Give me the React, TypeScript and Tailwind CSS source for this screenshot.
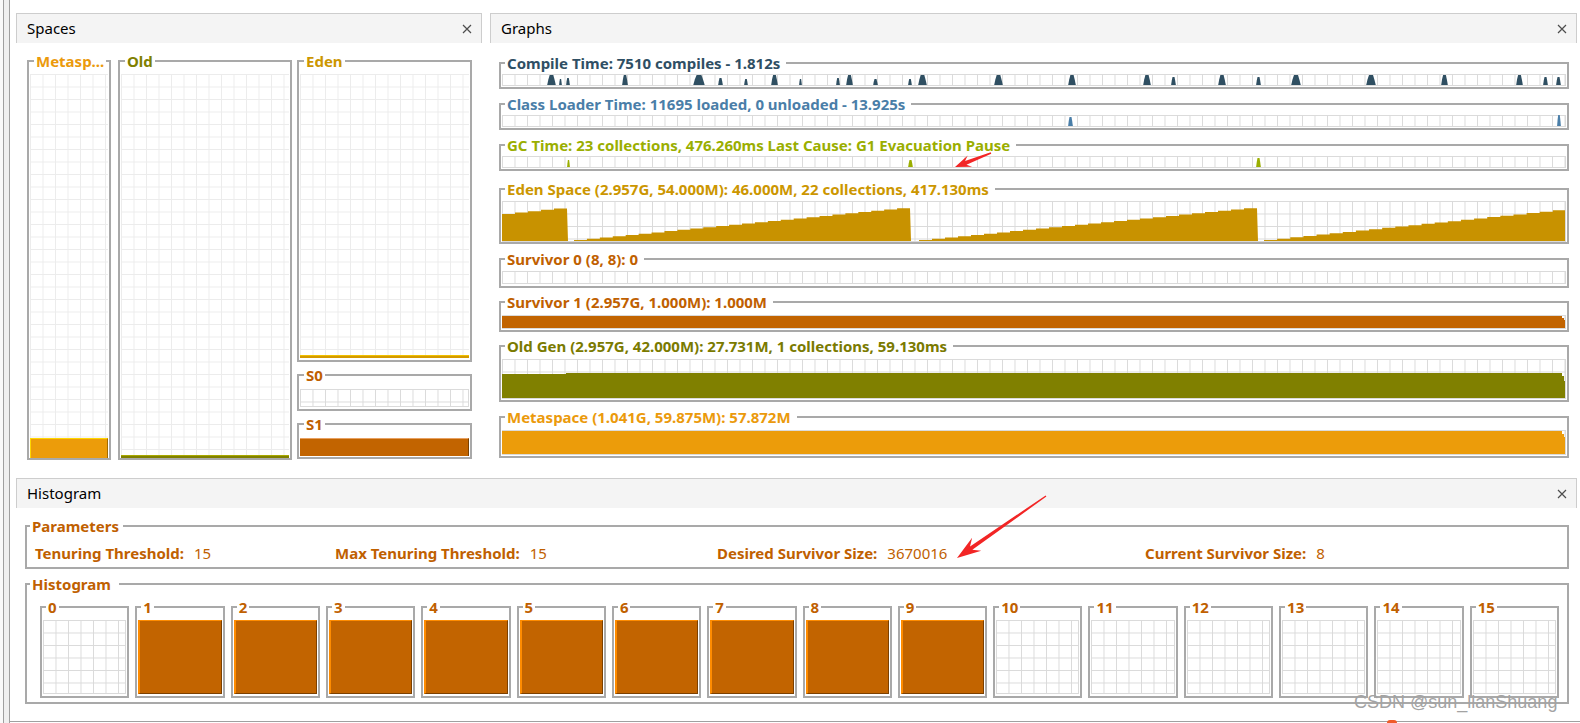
import React from "react";

// grid backgrounds (chart paper look)
const GRID_SPACE =
  "bg-[linear-gradient(to_right,#ececec_1px,transparent_1px),linear-gradient(to_bottom,#ececec_1px,transparent_1px)] bg-size-[12.5px_12.5px]";
const GRID_GRAPH =
  "bg-[linear-gradient(to_right,#dadada_1px,transparent_1px),linear-gradient(to_bottom,#dadada_1px,transparent_1px)] bg-size-[12.5px_12.5px] border-r border-b border-[#dadada]";

const STRIP_W = 1064;

type Peak = [number, number, number];

const compilePeaks: Peak[] = [
  [45, 54, 11], [57, 60, 7], [64, 68, 8], [120, 126, 11], [191, 203, 11], [216, 221, 8],
  [242, 246, 7], [269, 276, 11], [297, 300, 7], [334, 338, 8], [344, 351, 11], [371, 376, 7],
  [406, 410, 7], [416, 425, 11], [492, 501, 11], [566, 574, 11], [641, 649, 11], [669, 674, 9],
  [716, 724, 11], [754, 759, 9], [789, 799, 11], [864, 874, 11], [939, 946, 11], [1014, 1021, 11],
  [1041, 1046, 9], [1054, 1059, 9],
];
const loaderPeaks: Peak[] = [[566, 571, 10], [1055, 1059, 12]];
const gcPeaks: Peak[] = [[65, 68, 8], [406, 411, 8], [754, 759, 10]];

function peakPoints([x0, x1, h]: Peak, H: number) {
  const w = x1 - x0;
  return [
    [x0, H], [x0 + w * 0.15, H - h * 0.6], [x0 + w * 0.3, H - h],
    [x0 + w * 0.7, H - h], [x0 + w * 0.85, H - h * 0.55], [x1, H],
  ]
    .map((p) => p.join(","))
    .join(" ");
}

function Peaks({ peaks, color, h }: { peaks: Peak[]; color: string; h: number }) {
  return (
    <svg className="block h-full w-full" width={STRIP_W} height={h}>
      {peaks.map((p, i) => (
        <polygon key={i} points={peakPoints(p, h)} fill={color} />
      ))}
    </svg>
  );
}

// eden sawtooth: [x0, x1, v0, v1]
const edenSegs: [number, number, number, number][] = [
  [0, 65, 28, 35],
  [72, 408, 2, 35],
  [417, 755, 2, 35],
  [762, 1064, 2, 33],
];

function edenPoints(H: number) {
  const pts: number[][] = [[0, H]];
  edenSegs.forEach(([x0, x1, v0, v1], si) => {
    if (si > 0) pts.push([x0, H - 1]);
    const n = Math.max(1, Math.round((x1 - x0) / 13));
    for (let i = 0; i < n; i++) {
      const xa = x0 + ((x1 - x0) * i) / n;
      const xb = x0 + ((x1 - x0) * (i + 1)) / n;
      const v = v0 + ((v1 - v0) * i) / n;
      pts.push([xa, H - v], [xb, H - v]);
    }
    pts.push([x1 + 1, H - 1]);
  });
  pts.push([STRIP_W, H]);
  return pts.map((p) => p.join(",")).join(" ");
}

function EdenChart() {
  const H = 41;
  return (
    <svg className="block h-full w-full" width={STRIP_W} height={H}>
      <polygon points={edenPoints(H)} fill="#c89200" />
    </svg>
  );
}

function FlatBar({ h, color, levels }: { h: number; color: string; levels: [number, number, number][] }) {
  // levels: [x0, x1, value]
  return (
    <svg className="block h-full w-full" width={STRIP_W} height={h}>
      {levels.map(([x0, x1, v], i) => (
        <rect key={i} x={x0} y={h - v} width={x1 - x0} height={v} fill={color} />
      ))}
    </svg>
  );
}

function CloseIcon() {
  return (
    <svg width="10" height="10" viewBox="0 0 10 10" className="shrink-0">
      <path d="M1 1L9 9M9 1L1 9" stroke="#4d4d4d" strokeWidth="1.2" />
    </svg>
  );
}

function PanelHeader({ title }: { title: string }) {
  return (
    <div className="flex h-[30px] shrink-0 items-center justify-between border-t border-r border-l border-[#cdcdcd] bg-[#f4f4f4] pr-[9px] pl-[10px]">
      <span className="text-[15px] text-black">{title}</span>
      <CloseIcon />
    </div>
  );
}

function Box({
  title,
  titleClass,
  className = "",
  legendClass = "ml-[4px] px-[2px]",
  children,
}: {
  title: string;
  titleClass: string;
  className?: string;
  legendClass?: string;
  children: React.ReactNode;
}) {
  return (
    <fieldset className={`min-w-0 border-2 border-[#a9a9a9] ${className}`}>
      <legend className={`text-[15px] leading-[16px] font-bold whitespace-nowrap ${legendClass} ${titleClass}`}>
        {title}
      </legend>
      {children}
    </fieldset>
  );
}

function Graph({
  title,
  titleClass,
  className,
  stripClass,
  children,
}: {
  title: string;
  titleClass: string;
  className: string;
  stripClass: string;
  children?: React.ReactNode;
}) {
  return (
    <Box
      title={title}
      titleClass={titleClass}
      legendClass="ml-[3px] pl-[2px] pr-[6px]"
      className={`px-[1px] ${className}`}
    >
      <div className={`${GRID_GRAPH} ${stripClass}`}>{children}</div>
    </Box>
  );
}

function SpacesPanel() {
  return (
    <div className="flex w-[466px] shrink-0 flex-col">
      <PanelHeader title="Spaces" />
      <div className="flex pt-[10px] pl-[11px]">
        <Box title="Metasp..." titleClass="text-[#eb9a0c]" className="w-[84px] px-[1px] pt-[5px]">
          <div className={`flex h-[384px] flex-col justify-end ${GRID_SPACE}`}>
            <div className="h-[20px] border-t border-r border-l border-t-[#ffd700] border-r-[#a06a00] border-l-[#ffd700] bg-[#ec9c0a]" />
          </div>
        </Box>
        <Box title="Old" titleClass="text-[#808000]" className="ml-[7px] w-[174px] px-[1px] pt-[5px]">
          <div className={`flex h-[384px] flex-col justify-end ${GRID_SPACE}`}>
            <div className="h-[3px] border-t border-t-[#a8a800] bg-[#808000]" />
          </div>
        </Box>
        <div className="ml-[5px] flex w-[175px] flex-col">
          <Box title="Eden" titleClass="text-[#cc9600]" className="px-[1px] pt-[5px] pb-[2px]">
            <div className={`flex h-[284px] flex-col justify-end ${GRID_SPACE}`}>
              <div className="h-[3px] border-t border-t-[#f0c000] bg-[#d49a00]" />
            </div>
          </Box>
          <Box title="S0" titleClass="text-[#c06000]" className="mt-[5px] px-[1px] pt-[6px] pb-[2px]">
            <div className={`h-[18px] ${GRID_GRAPH}`} />
          </Box>
          <Box title="S1" titleClass="text-[#c06000]" className="mt-[5px] px-[1px] pt-[6px] pb-[1px]">
            <div className="h-[18px] border-t border-r border-t-[#e8a060] border-r-[#7a4000] bg-[#c26400]" />
          </Box>
        </div>
      </div>
    </div>
  );
}

function GraphsPanel() {
  return (
    <div className="flex min-w-0 flex-1 flex-col">
      <PanelHeader title="Graphs" />
      <div className="flex flex-col pt-[12px] pr-[8px] pl-[9px]">
        <Graph
          title="Compile Time: 7510 compiles - 1.812s"
          titleClass="text-[#2f4f64]"
          className="pt-[3px] pb-[1px]"
          stripClass="h-[12px]"
        >
          <Peaks peaks={compilePeaks} color="#2f4f62" h={12} />
        </Graph>
        <Graph
          title="Class Loader Time: 11695 loaded, 0 unloaded - 13.925s"
          titleClass="text-[#4a7ea8]"
          className="mt-[7px] pt-[3px] pb-[1px]"
          stripClass="h-[12px]"
        >
          <Peaks peaks={loaderPeaks} color="#4a7ea8" h={12} />
        </Graph>
        <Graph
          title="GC Time: 23 collections, 476.260ms Last Cause: G1 Evacuation Pause"
          titleClass="text-[#9aae00]"
          className="mt-[7px] pt-[3px] pb-[1px]"
          stripClass="h-[12px]"
        >
          <Peaks peaks={gcPeaks} color="#9aae00" h={12} />
        </Graph>
        <Graph
          title="Eden Space (2.957G, 54.000M): 46.000M, 22 collections, 417.130ms"
          titleClass="text-[#cc9600]"
          className="mt-[10px] pt-[4px]"
          stripClass="h-[41px]"
        >
          <EdenChart />
        </Graph>
        <Graph
          title="Survivor 0 (8, 8): 0"
          titleClass="text-[#c06000]"
          className="mt-[7px] pt-[4px] pb-[2px]"
          stripClass="h-[13px]"
        />
        <Graph
          title="Survivor 1 (2.957G, 1.000M): 1.000M"
          titleClass="text-[#c06000]"
          className="mt-[6px] pt-[5px] pb-[1px]"
          stripClass="h-[14px]"
        >
          <FlatBar h={14} color="#c26400" levels={[[0, 1060, 13], [1060, 1062, 11], [1062, 1064, 9]]} />
        </Graph>
        <Graph
          title="Old Gen (2.957G, 42.000M): 27.731M, 1 collections, 59.130ms"
          titleClass="text-[#7a7a00]"
          className="mt-[6px] pt-[5px] pb-[1px]"
          stripClass="h-[40px]"
        >
          <FlatBar h={40} color="#808000" levels={[[0, 64, 25], [64, 1060, 26], [1060, 1062, 23], [1062, 1064, 18]]} />
        </Graph>
        <Graph
          title="Metaspace (1.041G, 59.875M): 57.872M"
          titleClass="text-[#eb9a0c]"
          className="mt-[7px] pt-[5px] pb-[1px]"
          stripClass="h-[25px]"
        >
          <FlatBar h={25} color="#ec9c0a" levels={[[0, 1060, 24], [1060, 1062, 21], [1062, 1064, 18]]} />
        </Graph>
      </div>
    </div>
  );
}

const params = [
  { label: "Tenuring Threshold:", value: "15", w: "w-[300px]" },
  { label: "Max Tenuring Threshold:", value: "15", w: "w-[382px]" },
  { label: "Desired Survivor Size:", value: "3670016", w: "w-[428px]" },
  { label: "Current Survivor Size:", value: "8", w: "" },
];

const buckets = Array.from({ length: 16 }, (_, i) => ({ n: i, filled: i >= 1 && i <= 9 }));

function HistogramPanel() {
  return (
    <div className="mt-[8px] flex flex-col">
      <PanelHeader title="Histogram" />
      <div className="pt-[10px] pr-[8px] pl-[9px]">
        <Box title="Parameters" titleClass="text-[#c06000]" legendClass="ml-[3px] pl-[2px] pr-[4px]" className="pt-[9px] pb-[4px]">
          <div className="flex h-[20px] items-center pl-[8px] text-[15px] text-[#c06000]">
            {params.map((p) => (
              <div key={p.label} className={`flex shrink-0 items-center gap-[10px] ${p.w}`}>
                <span className="font-bold">{p.label}</span>
                <span>{p.value}</span>
              </div>
            ))}
          </div>
        </Box>
        <Box title="Histogram" titleClass="text-[#c06000]" legendClass="ml-[3px] pl-[2px] pr-[8px]" className="mt-[7px] pt-[7px] pb-[4px]">
          <div className="grid grid-cols-16 gap-[6px] pr-[8px] pl-[13px]">
            {buckets.map((b) => (
              <Box
                key={b.n}
                title={String(b.n)}
                titleClass="text-[#c06000]"
                legendClass="ml-[3px] px-[2px]"
                className="px-[1px] pt-[5px] pb-[2px]"
              >
                {b.filled ? (
                  <div className="h-[74px] border-t border-r border-b border-l-2 border-t-[#ff8c00] border-r-[#7c4000] border-b-[#7c4000] border-l-[#ff8c00] bg-[#c26400]" />
                ) : (
                  <div className={`h-[74px] ${GRID_GRAPH}`} />
                )}
              </Box>
            ))}
          </div>
        </Box>
      </div>
    </div>
  );
}

function arrowPoints(tx: number, ty: number, hx: number, hy: number, head: number, wid: number) {
  const dx = hx - tx;
  const dy = hy - ty;
  const len = Math.hypot(dx, dy);
  const ux = dx / len;
  const uy = dy / len;
  const nx = -uy;
  const ny = ux;
  const bx = hx - ux * head;
  const by = hy - uy * head;
  const jx = hx - ux * head * 0.72;
  const jy = hy - uy * head * 0.72;
  const pts = [
    [tx + nx * 0.7, ty + ny * 0.7],
    [jx + nx * 2, jy + ny * 2],
    [bx + nx * wid, by + ny * wid],
    [hx, hy],
    [bx - nx * wid, by - ny * wid],
    [jx - nx * 2, jy - ny * 2],
    [tx - nx * 0.7, ty - ny * 0.7],
  ];
  return pts.map((p) => p.join(",")).join(" ");
}

export default function App() {
  return (
    <div className="relative flex h-[723px] w-[1580px] overflow-hidden bg-white font-['Noto_Sans',sans-serif]">
      <div className="w-[3px] shrink-0 bg-[#fafafa]" />
      <div className="w-[7px] shrink-0 border-r border-l border-[#a0a0a0] bg-[#f0f0f0]" />
      <div className="flex h-[722px] min-w-0 flex-1 flex-col border-b border-[#a0a0a0] pt-[13px] pr-[3px] pl-[6px]">
        <div className="flex h-[457px] gap-[8px]">
          <SpacesPanel />
          <GraphsPanel />
        </div>
        <HistogramPanel />
      </div>

      {/* annotations drawn on top of the screenshot */}
      <svg className="pointer-events-none absolute inset-0" width="1580" height="723">
        <polygon points={arrowPoints(991, 153, 955, 167, 16, 6)} fill="#f22525" />
        <polygon points={arrowPoints(1046, 496, 957, 558, 24, 8)} fill="#f22525" />
      </svg>
      <div className="pointer-events-none absolute top-[690px] left-[1354px] font-['Liberation_Sans',sans-serif] text-[18px] leading-[24px] text-[#a3a3a3]">
        CSDN @sun_lianShuang
      </div>
      <div className="absolute top-[720px] left-[1387px] h-[3px] w-[10px] rounded-t-full bg-[#f05a28]" />
    </div>
  );
}
